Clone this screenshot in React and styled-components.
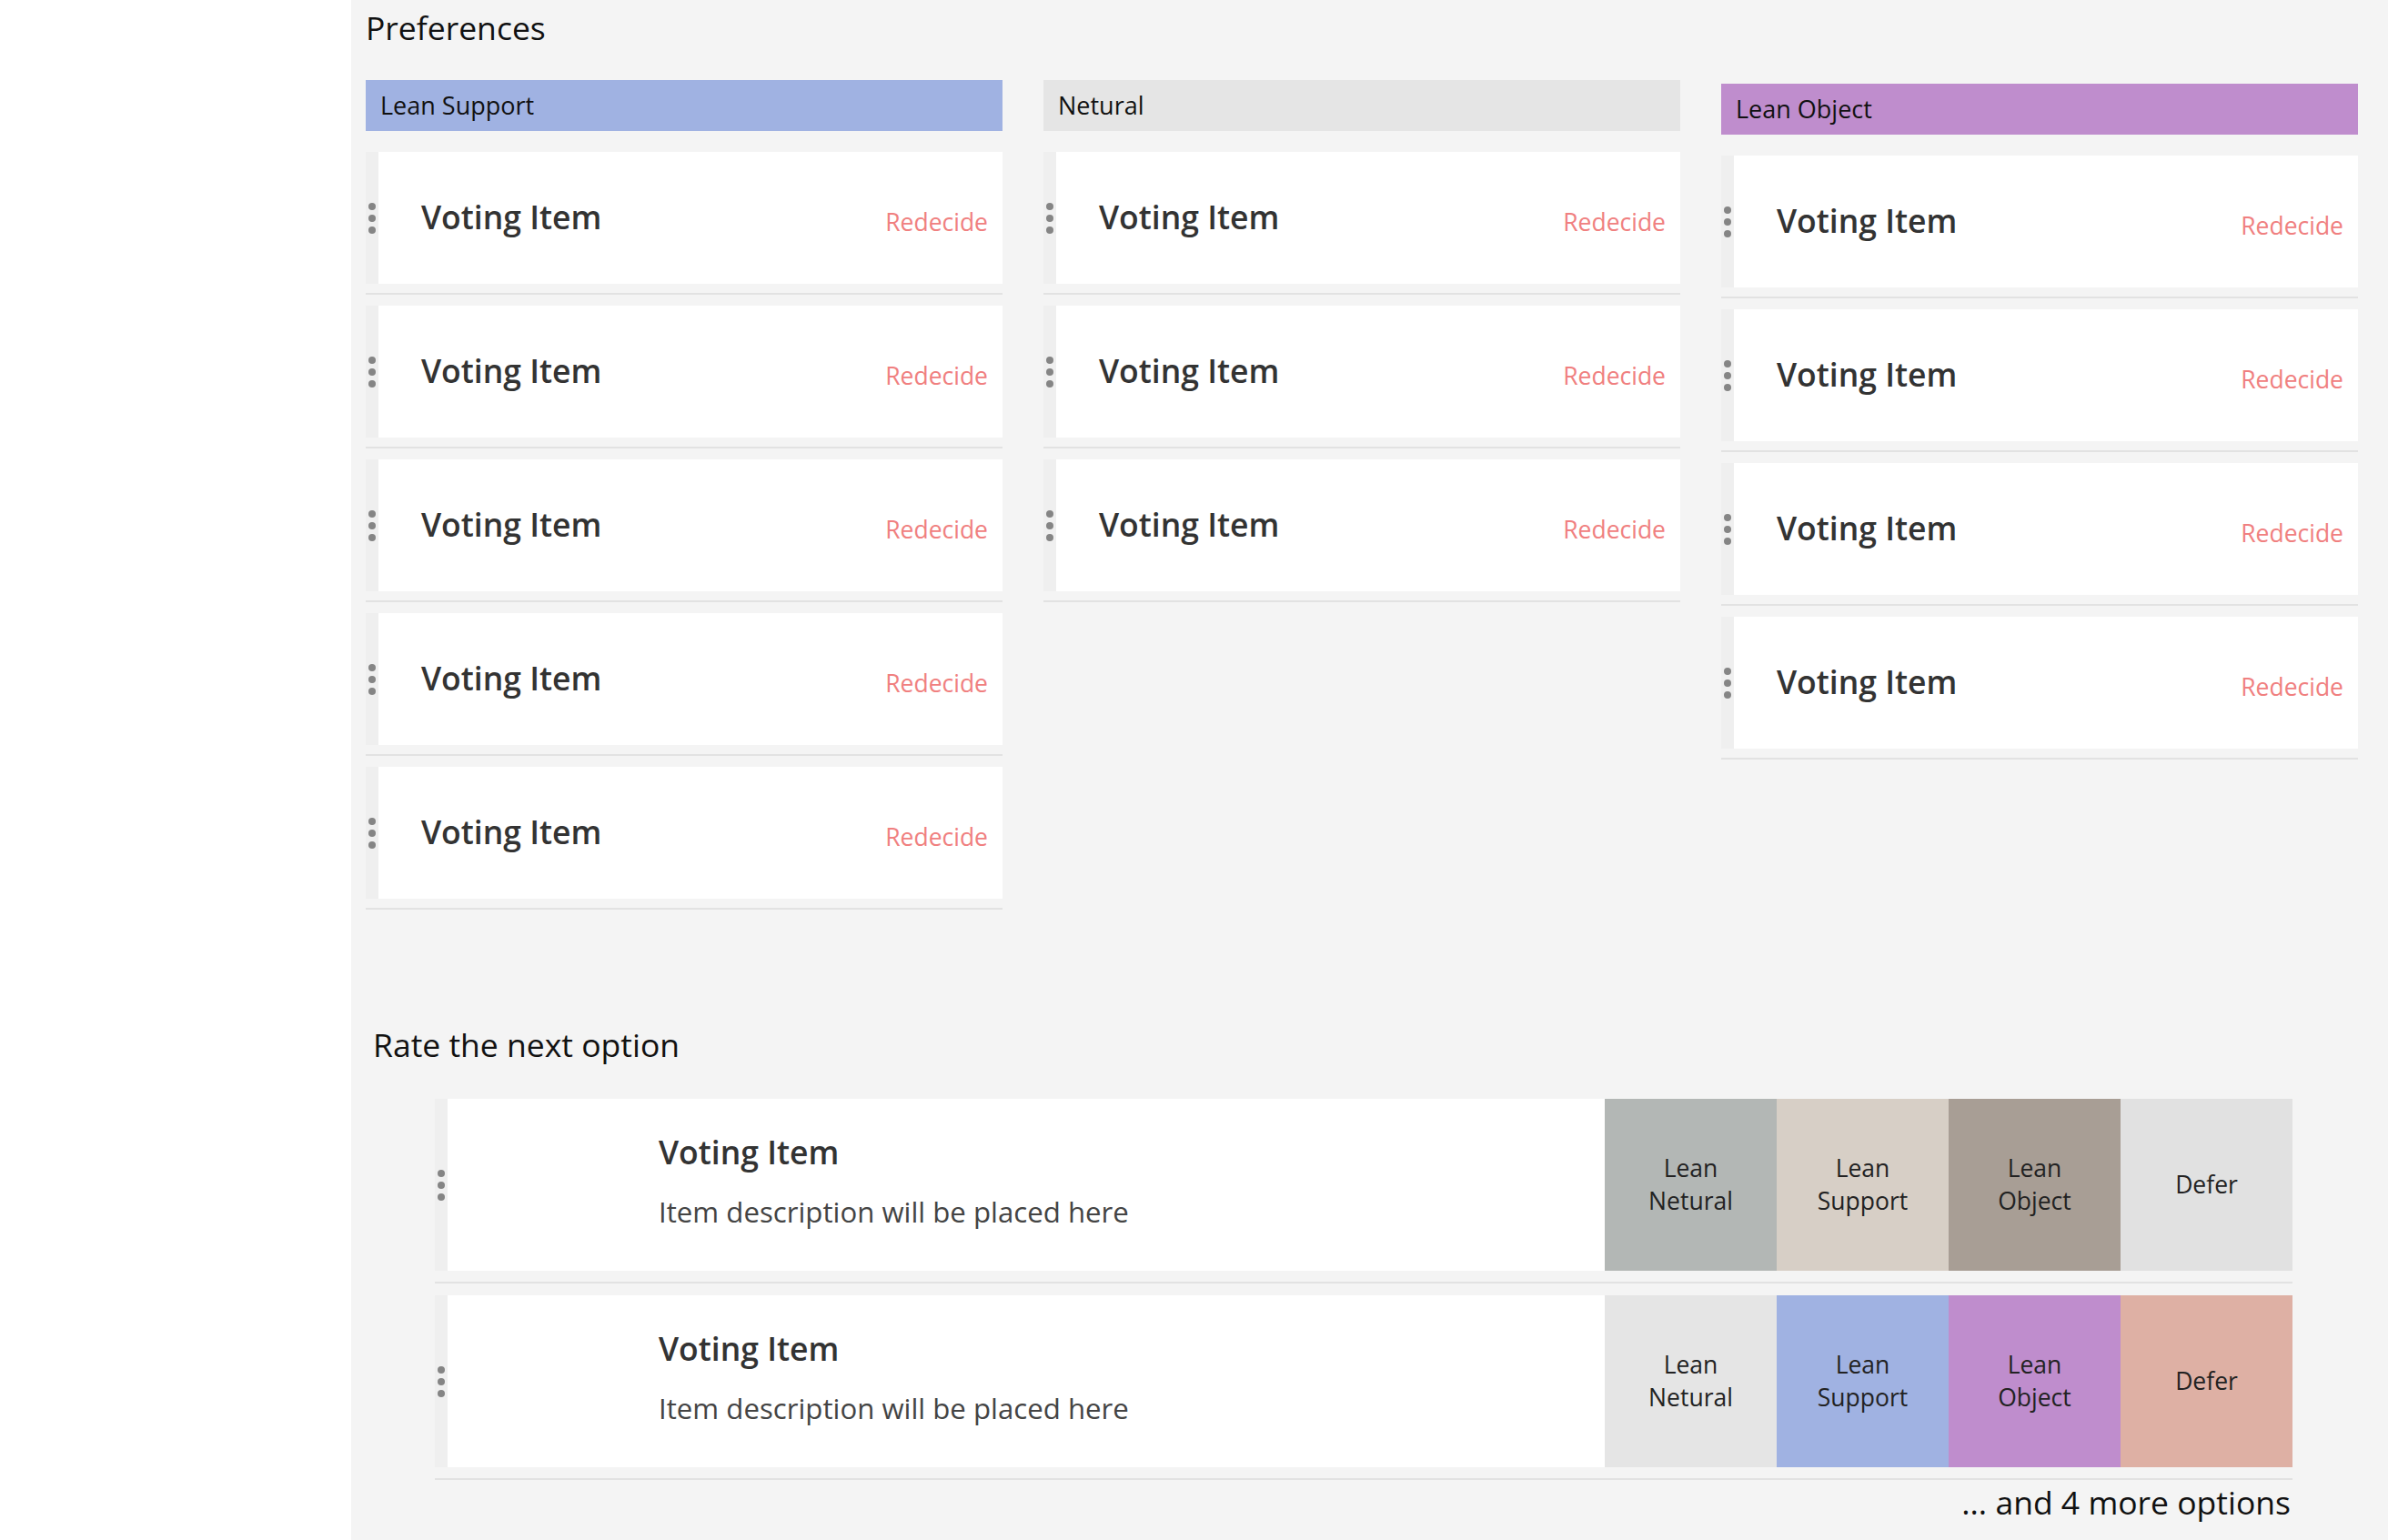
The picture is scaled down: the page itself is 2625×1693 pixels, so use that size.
import React from "react";
import styled, { createGlobalStyle } from "styled-components";

const GlobalStyle = createGlobalStyle`
  body {
    margin: 0;
    font-family: "Open Sans", "Liberation Sans", sans-serif;
    color: #111;
  }
`;

const Page = styled.div`
  display: flex;
  min-height: 100vh;
`;

const Sidebar = styled.aside`
  width: 386px;
  flex-shrink: 0;
  background-color: #fff;
`;

const Main = styled.main`
  flex: 1;
  background-color: #f4f4f4;
  padding: 6px 31px 0 16px;
`;

const Heading = styled.h2`
  margin: 0;
  padding-left: ${(p) => p.$indent || 0}px;
  font-size: 35.5px;
  font-weight: 400;
  line-height: 48px;
  color: #111;
`;

const Board = styled.div`
  display: grid;
  grid-template-columns: repeat(3, 700px);
  column-gap: 45px;
  align-items: start;
  margin-top: 34px;
`;

const Column = styled.section`
  margin-top: ${(p) => p.$offset || 0}px;
`;

const ColumnHeader = styled.div`
  height: 56px;
  line-height: 56px;
  padding-left: 16px;
  background-color: ${(p) => p.$color};
  font-size: 27px;
  color: #111;
`;

const List = styled.div`
  display: flex;
  flex-direction: column;
  gap: 12px;
  margin-top: 23px;
`;

const Item = styled.div`
  padding-bottom: ${(p) => p.$space}px;
  border-bottom: 2px solid #e2e2e2;
`;

const Card = styled.div`
  display: flex;
  height: ${(p) => p.$height}px;
  background-color: #fff;
`;

const Handle = styled.div`
  width: 14px;
  flex-shrink: 0;
  background-color: #efefef;
  display: flex;
  flex-direction: column;
  align-items: center;
  justify-content: center;
  gap: 5px;
`;

const Dot = styled.span`
  width: 8px;
  height: 8px;
  border-radius: 50%;
  background-color: #858585;
`;

const CardBody = styled.div`
  flex: 1;
  display: flex;
  align-items: center;
  justify-content: space-between;
  padding: 0 16px 0 47px;
`;

const ItemTitle = styled.div`
  margin-top: -4px;
  font-size: 35.5px;
  font-weight: 600;
  color: #333;
`;

const Redecide = styled.button`
  margin-top: 8px;
  padding: 0;
  border: none;
  background: none;
  font-family: inherit;
  font-size: 26.5px;
  color: #f08080;
  cursor: pointer;
`;

const RateSection = styled.section`
  margin-top: 124px;
  padding-bottom: 20px;
`;

const RateList = styled.div`
  display: flex;
  flex-direction: column;
  gap: 13px;
  margin: 36px 74px 0 76px;
`;

const RateBody = styled.div`
  flex: 1;
  padding: 34px 0 0 232px;
`;

const RateTitle = styled(ItemTitle)`
  margin-top: 0;
  line-height: 48px;
`;

const RateDesc = styled.div`
  margin-top: 21px;
  font-size: 31.2px;
  line-height: 42px;
  color: #444;
`;

const Choice = styled.button`
  width: 189px;
  flex-shrink: 0;
  border: none;
  padding: 0;
  background-color: ${(p) => p.$color};
  font-family: inherit;
  font-size: 26.5px;
  line-height: 35.5px;
  color: #222;
  cursor: pointer;
`;

const MoreText = styled.div`
  margin: 0 74px 0 76px;
  text-align: right;
  font-size: 35.5px;
  line-height: 48px;
  padding-right: 2px;
  color: #111;
`;

const columns = [
  { name: "Lean Support", color: "#a0b2e2", count: 5, offset: 0 },
  { name: "Netural", color: "#e5e5e5", count: 3, offset: 0 },
  { name: "Lean Object", color: "#bf8dcd", count: 4, offset: 4 },
];

const choiceRows = [
  ["#b3b7b5", "#d7cfc6", "#a89e95", "#e1e1e1"],
  ["#e5e5e5", "#a0b2e2", "#bf8dcd", "#deb0a4"],
];

const choiceLabels = [["Lean", "Netural"], ["Lean", "Support"], ["Lean", "Object"], ["Defer"]];

function DragHandle() {
  return (
    <Handle>
      <Dot />
      <Dot />
      <Dot />
    </Handle>
  );
}

export default function App() {
  return (
    <Page>
      <GlobalStyle />
      <Sidebar />
      <Main>
        <Heading>Preferences</Heading>
        <Board>
          {columns.map((col) => (
            <Column key={col.name} $offset={col.offset}>
              <ColumnHeader $color={col.color}>{col.name}</ColumnHeader>
              <List>
                {Array.from({ length: col.count }).map((_, i) => (
                  <Item key={i} $space={10}>
                    <Card $height={145}>
                      <DragHandle />
                      <CardBody>
                        <ItemTitle>Voting Item</ItemTitle>
                        <Redecide>Redecide</Redecide>
                      </CardBody>
                    </Card>
                  </Item>
                ))}
              </List>
            </Column>
          ))}
        </Board>

        <RateSection>
          <Heading $indent={8}>Rate the next option</Heading>
          <RateList>
            {choiceRows.map((colors, r) => (
              <Item key={r} $space={12}>
                <Card $height={189}>
                  <DragHandle />
                  <RateBody>
                    <RateTitle>Voting Item</RateTitle>
                    <RateDesc>Item description will be placed here</RateDesc>
                  </RateBody>
                  {choiceLabels.map((lines, c) => (
                    <Choice key={c} $color={colors[c]}>
                      {lines.map((l, k) => (
                        <React.Fragment key={k}>
                          {k > 0 && <br />}
                          {l}
                        </React.Fragment>
                      ))}
                    </Choice>
                  ))}
                </Card>
              </Item>
            ))}
          </RateList>
          <MoreText>... and 4 more options</MoreText>
        </RateSection>
      </Main>
    </Page>
  );
}
